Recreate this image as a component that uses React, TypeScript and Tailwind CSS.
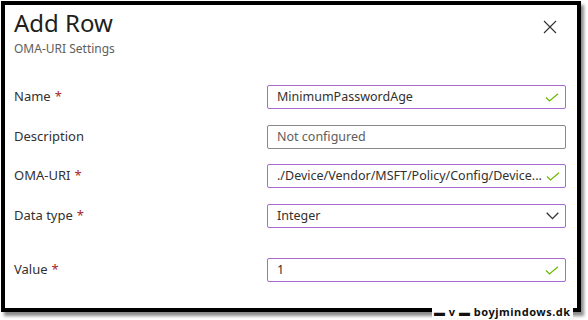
import React from 'react'

const font = { fontFamily: '"Segoe UI", "Noto Sans", "Open Sans", sans-serif' }

const Check = () => (
  <svg width="14" height="9" viewBox="0 0 14 9" fill="none" className="shrink-0">
    <path d="M1 4.5L4.5 8L13 0.8" stroke="#6bb700" strokeWidth="1.2" />
  </svg>
)

const Chevron = () => (
  <svg width="13" height="8" viewBox="0 0 13 8" fill="none" className="shrink-0">
    <path d="M0.7 0.8L6.5 6.6L12.3 0.8" stroke="#323130" strokeWidth="1.3" />
  </svg>
)

interface RowProps {
  label: string
  required?: boolean
  className?: string
  children: React.ReactNode
}

const Row: React.FC<RowProps> = ({ label, required, className = '', children }) => (
  <div className={`flex items-center ${className}`}>
    <div className="w-[253px] text-[13px] text-[#323130]">
      {label}
      {required && <span className="ml-[4px] text-[#a4262c]">*</span>}
    </div>
    {children}
  </div>
)

const Field: React.FC<{ children: React.ReactNode; muted?: boolean }> = ({ children, muted }) => (
  <div
    className={`flex h-[24px] w-[299px] items-center justify-between rounded-[2px] border pl-[9px] pr-[6px] text-[12.5px] ${
      muted ? 'border-[#8a8886] text-[#605e5c]' : 'border-[#a66bcc] text-[#323130]'
    }`}
  >
    {children}
  </div>
)

export default function App() {
  return (
    <div className="relative h-[320px] w-[588px] bg-white" style={font}>
      <div className="ml-[1px] mt-[1px] h-[311px] w-[580px] border-4 border-black bg-white pl-[9px] pr-[10px] pt-[3px] shadow-[3px_4px_3px_rgba(0,0,0,0.45)]">
        <div className="flex items-start justify-between">
          <div>
            <h1 className="text-[24px] leading-[30px] text-[#201f1e]">Add Row</h1>
            <p className="mt-[3px] text-[12px] leading-[16px] text-[#605e5c]">OMA-URI Settings</p>
          </div>
          <svg width="14" height="14" viewBox="0 0 14 14" className="mr-[10px] mt-[12px]">
            <path d="M1 1L13 13M13 1L1 13" stroke="#323130" strokeWidth="1.1" />
          </svg>
        </div>

        <Row label="Name" required className="mt-[28px]">
          <Field>
            <span>MinimumPasswordAge</span>
            <Check />
          </Field>
        </Row>
        <Row label="Description" className="mt-[16px]">
          <Field muted>
            <span>Not configured</span>
          </Field>
        </Row>
        <Row label="OMA-URI" required className="mt-[15px]">
          <Field>
            <span className="whitespace-nowrap">./Device/Vendor/MSFT/Policy/Config/Device...</span>
            <span className="ml-[4px]"><Check /></span>
          </Field>
        </Row>
        <Row label="Data type" required className="mt-[16px]">
          <Field>
            <span>Integer</span>
            <Chevron />
          </Field>
        </Row>
        <Row label="Value" required className="mt-[30px]">
          <Field>
            <span>1</span>
            <Check />
          </Field>
        </Row>
      </div>

      {/* watermark over the frame */}
      <div className="absolute left-[432px] top-[304px] whitespace-nowrap bg-white px-[2px] text-[11px] font-bold leading-[13px] tracking-[0.5px] text-[#111]">
        ▬ v ▬ boyjmindows.dk
      </div>
    </div>
  )
}
